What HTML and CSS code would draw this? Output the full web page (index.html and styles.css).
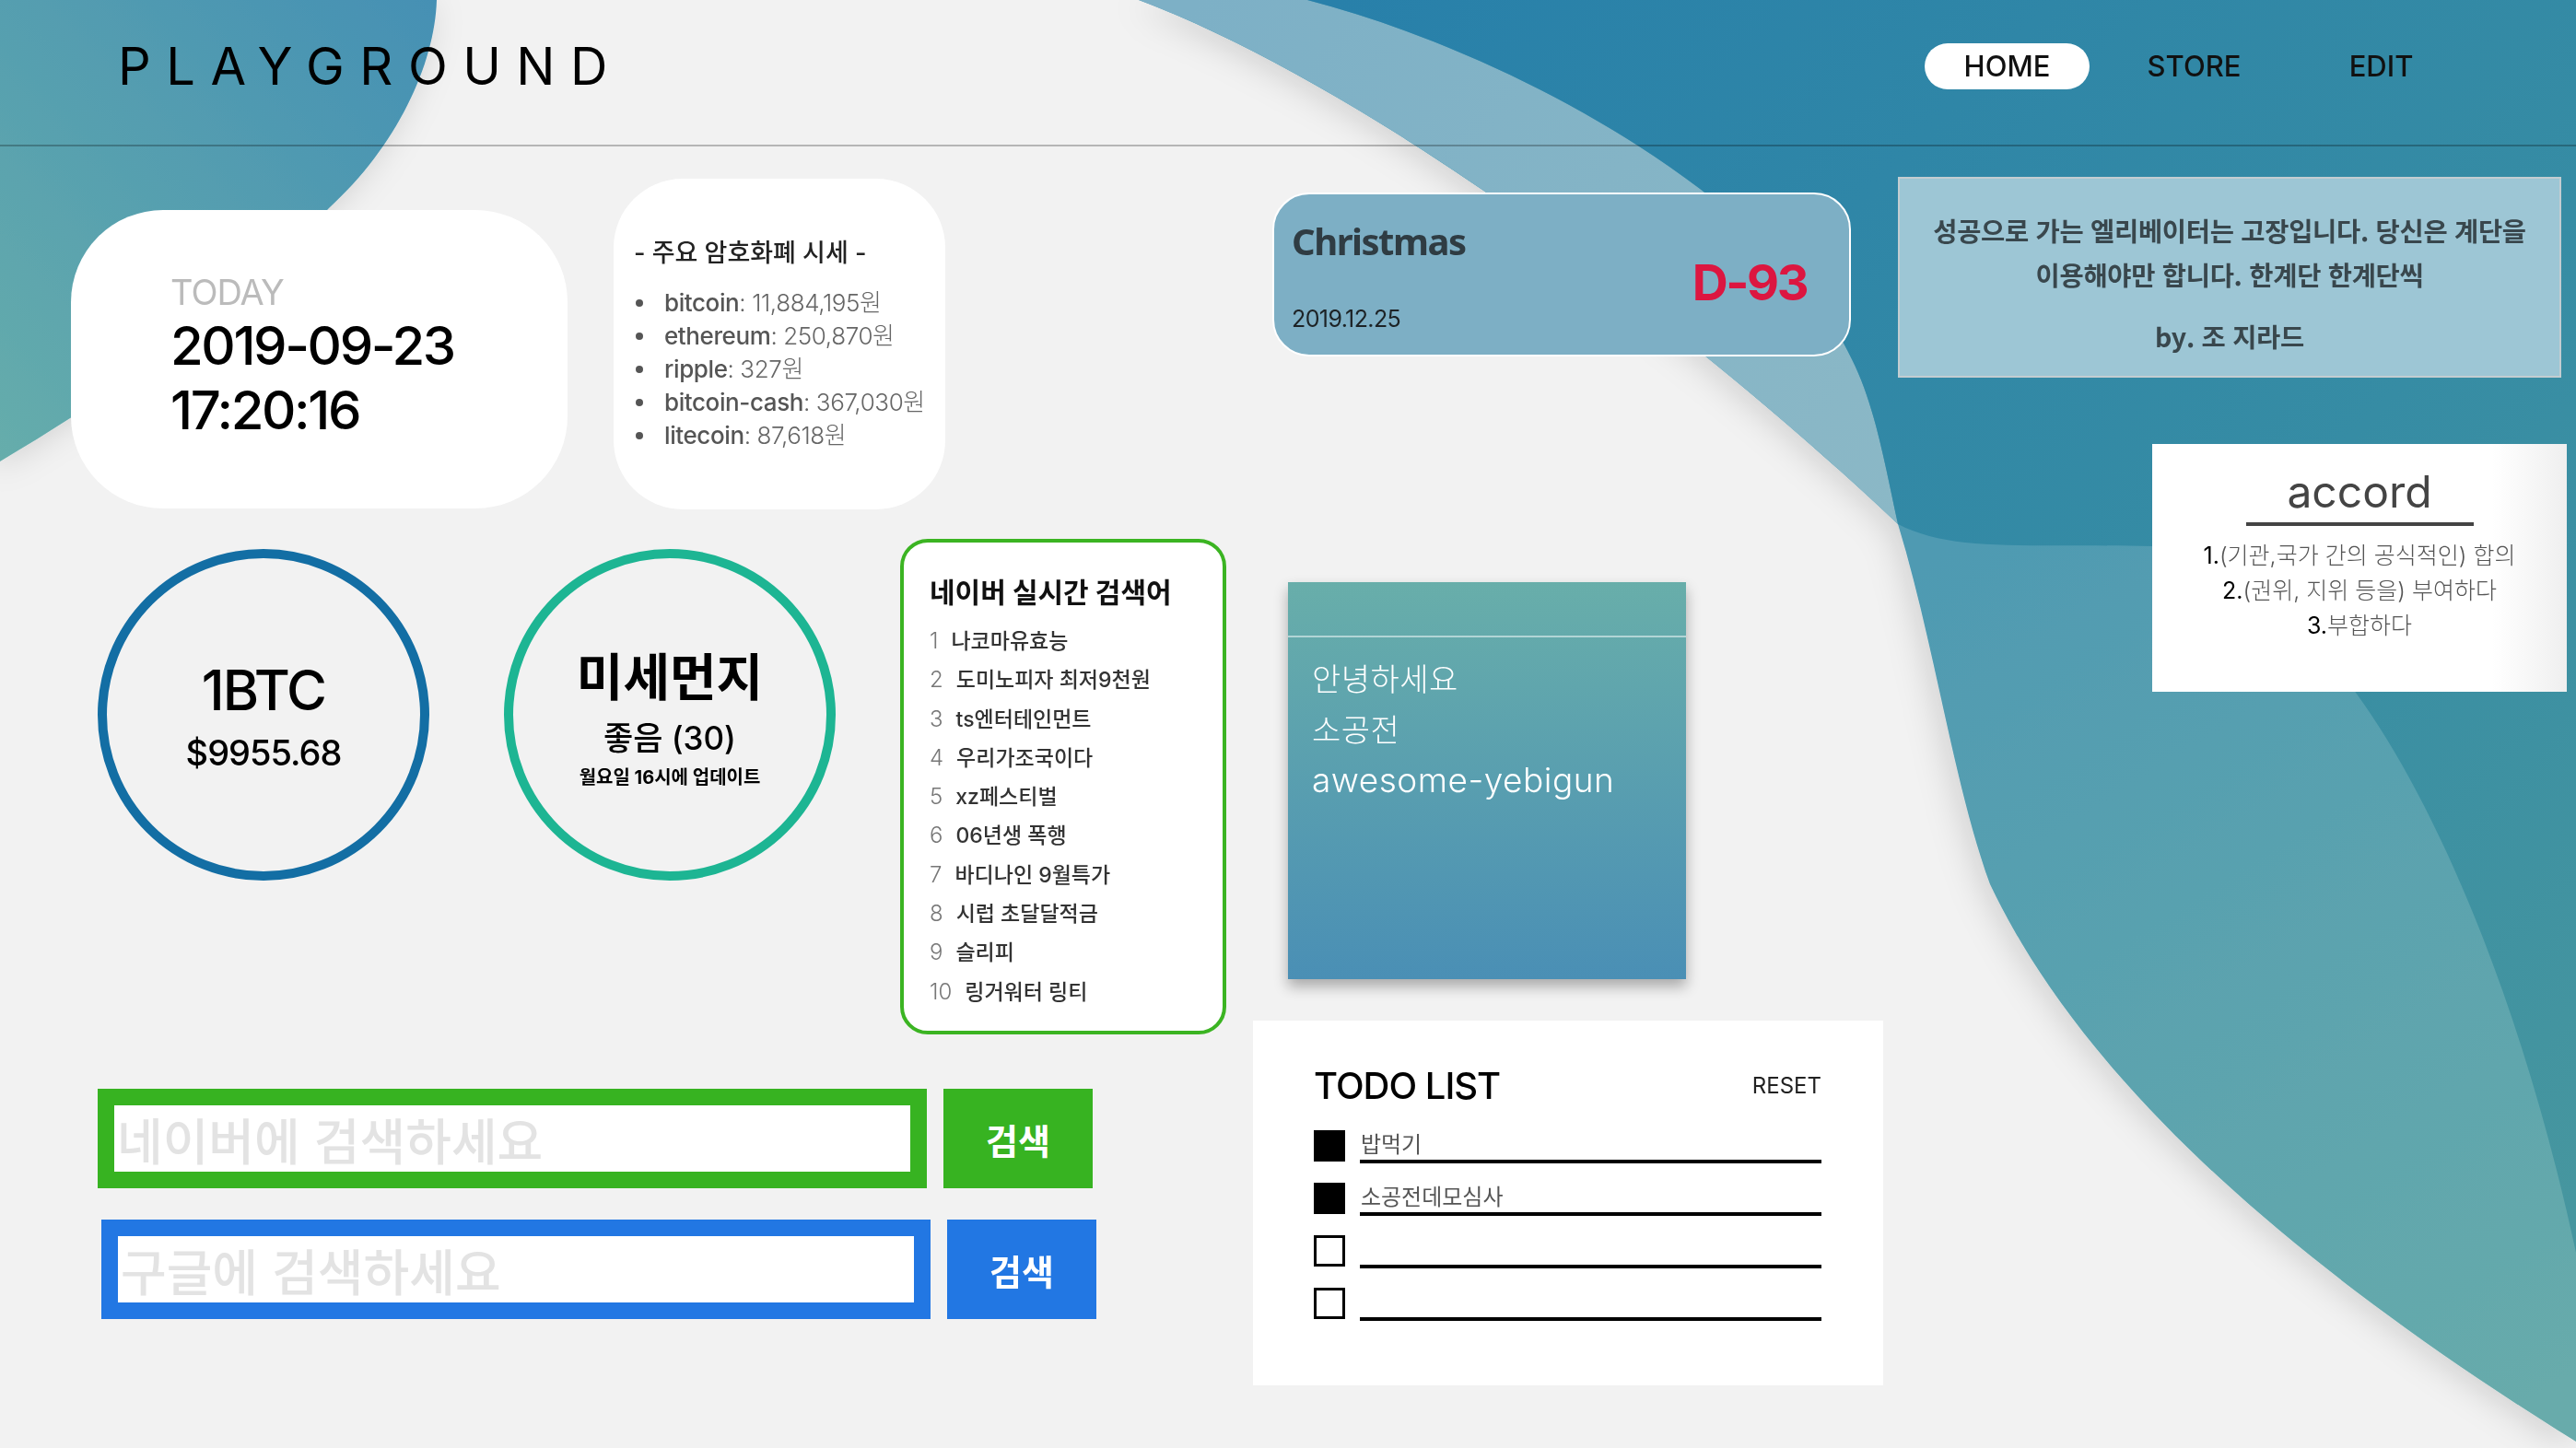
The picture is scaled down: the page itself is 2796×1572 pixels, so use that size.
FILE: index.html
```html
<!DOCTYPE html>
<html lang="ko">
<head>
    <meta charset="utf-8">
    <title>PLAYGROUND</title>
    <link rel="stylesheet" href="styles.css">
</head>
<body>
    <div class="bg">
        <svg viewBox="0 0 2796 1572" preserveAspectRatio="none">
            <defs>
                <linearGradient id="gLeft" x1="1" y1="0" x2="0" y2="1">
                    <stop offset="0" stop-color="#4590b4"/>
                    <stop offset="1" stop-color="#66adab"/>
                </linearGradient>
                <linearGradient id="gTeal" gradientUnits="userSpaceOnUse" x1="2100" y1="600" x2="2700" y2="1550">
                    <stop offset="0" stop-color="#4f9ab2"/>
                    <stop offset="1" stop-color="#67abab"/>
                </linearGradient>
                <linearGradient id="gDark" gradientUnits="userSpaceOnUse" x1="1450" y1="0" x2="2796" y2="1300">
                    <stop offset="0" stop-color="#2880aa"/>
                    <stop offset="0.6" stop-color="#368ca4"/>
                    <stop offset="1" stop-color="#46969f"/>
                </linearGradient>
                <linearGradient id="gLight" gradientUnits="userSpaceOnUse" x1="1300" y1="0" x2="2060" y2="570">
                    <stop offset="0" stop-color="#7db0c6"/>
                    <stop offset="1" stop-color="#8bb8c6"/>
                </linearGradient>
                <filter id="soft" x="-20%" y="-20%" width="140%" height="140%">
                    <feDropShadow dx="-6" dy="6" stdDeviation="18" flood-color="#000" flood-opacity="0.14"/>
                </filter>
            </defs>
            <path filter="url(#soft)" fill="url(#gLeft)" d="M0 0 H474 C472 70 430 160 357 226 C250 340 120 430 0 501 Z"/>
            <path filter="url(#soft)" fill="url(#gTeal)" d="M1236 0 C1500 100 1850 370 2060 569 C2100 700 2120 850 2160 960 C2250 1150 2450 1350 2796 1565 V0 Z"/>
            <path fill="url(#gLight)" d="M1236 0 C1500 100 1850 370 2060 569 C2045 500 2035 440 2010 390 C1930 220 1650 60 1419 0 Z"/>
            <path fill="url(#gDark)" d="M1419 0 C1650 60 1930 220 2010 390 C2035 440 2045 500 2060 569 C2120 600 2200 590 2336 593 C2450 600 2510 680 2557 752 C2650 880 2740 1100 2796 1360 V0 Z"/>
        </svg>
    </div>

    <header class="top">
        <div class="logo">PLAYGROUND</div>
        <nav class="menu">
            <a class="on">HOME</a>
            <a>STORE</a>
            <a>EDIT</a>
        </nav>
    </header>

    <main class="board">
        <section class="col-left">
            <div class="row-a">
                <div class="today">
                    <div class="today-label">TODAY</div>
                    <div class="today-date">2019-09-23</div>
                    <div class="today-date">17:20:16</div>
                </div>
                <div class="coins">
                    <h3>- 주요 암호화폐 시세 -</h3>
                    <ul>
                        <li><b>bitcoin</b>: 11,884,195원</li>
                        <li><b>ethereum</b>: 250,870원</li>
                        <li><b>ripple</b>: 327원</li>
                        <li><b>bitcoin-cash</b>: 367,030원</li>
                        <li><b>litecoin</b>: 87,618원</li>
                    </ul>
                </div>
            </div>

            <div class="row-b">
                <div class="circle btc">
                    <div class="btc-name">1BTC</div>
                    <div class="btc-price">$9955.68</div>
                </div>
                <div class="circle dust">
                    <div class="dust-title">미세먼지</div>
                    <div class="dust-value">좋음 (30)</div>
                    <div class="dust-time">월요일 16시에 업데이트</div>
                </div>
                <div class="rank">
                    <h3>네이버 실시간 검색어</h3>
                    <ol>
                        <li><span class="num">1</span>나코마유효능</li>
                        <li><span class="num">2</span>도미노피자 최저9천원</li>
                        <li><span class="num">3</span>ts엔터테인먼트</li>
                        <li><span class="num">4</span>우리가조국이다</li>
                        <li><span class="num">5</span>xz페스티벌</li>
                        <li><span class="num">6</span>06년생 폭행</li>
                        <li><span class="num">7</span>바디나인 9월특가</li>
                        <li><span class="num">8</span>시럽 초달달적금</li>
                        <li><span class="num">9</span>슬리피</li>
                        <li><span class="num">10</span>링거워터 링티</li>
                    </ol>
                </div>
            </div>

            <div class="searches">
                <form class="search naver">
                    <input type="text" placeholder="네이버에 검색하세요">
                    <button type="button">검색</button>
                </form>
                <form class="search google">
                    <input type="text" placeholder="구글에 검색하세요">
                    <button type="button">검색</button>
                </form>
            </div>
        </section>

        <section class="col-mid">
            <div class="dday">
                <div class="dday-name">Christmas</div>
                <div class="dday-count">D-93</div>
                <div class="dday-date">2019.12.25</div>
            </div>

            <div class="memo">
                <div class="memo-top"></div>
                <div class="memo-body">
                    <p class="ko">안녕하세요</p>
                    <p class="ko">소공전</p>
                    <p>awesome-yebigun</p>
                </div>
            </div>

            <div class="todo">
                <div class="todo-head">
                    <h3>TODO LIST</h3>
                    <span class="reset">RESET</span>
                </div>
                <div class="todo-row done">
                    <span class="check"></span>
                    <input type="text" value="밥먹기">
                </div>
                <div class="todo-row done">
                    <span class="check"></span>
                    <input type="text" value="소공전데모심사">
                </div>
                <div class="todo-row">
                    <span class="check"></span>
                    <input type="text">
                </div>
                <div class="todo-row">
                    <span class="check"></span>
                    <input type="text">
                </div>
            </div>
        </section>

        <section class="col-right">
            <div class="quote">
                <p>성공으로 가는 엘리베이터는 고장입니다. 당신은 계단을<br>이용해야만 합니다. 한계단 한계단씩</p>
                <p class="by">by. 조 지라드</p>
            </div>

            <div class="word">
                <div class="word-title">accord</div>
                <div class="word-bar"></div>
                <p><span>1.</span>(기관,국가 간의 공식적인) 합의</p>
                <p><span>2.</span>(권위, 지위 등을) 부여하다</p>
                <p><span>3.</span>부합하다</p>
            </div>
        </section>
    </main>
</body>
</html>
```

FILE: styles.css
```css
*{
    box-sizing: border-box;
}
html, body{
    margin: 0;
    padding: 0;
}
body{
    background-color: #f2f2f2;
    font-family: Inter, "Noto Sans CJK KR", sans-serif;
    color: #111;
    width: 2796px;
    height: 1572px;
    overflow: hidden;
}
.bg{
    position: fixed;
    top: 0;
    left: 0;
    width: 2796px;
    height: 1572px;
    z-index: -1;
}
.bg svg{
    width: 100%;
    height: 100%;
    display: block;
}
h3, p, ul, ol{
    margin: 0;
    padding: 0;
}

/*=======Header=======*/
.top{
    height: 159px;
    display: flex;
    justify-content: space-between;
    align-items: center;
    padding: 0 122px 14px 128px;
    border-bottom: 2px solid rgba(0, 0, 0, 0.25);
}
.logo{
    font-size: 56px;
    font-weight: 400;
    letter-spacing: 16.5px;
    color: #000;
}
.menu{
    display: flex;
    gap: 24px;
}
.menu a{
    width: 179px;
    height: 50px;
    line-height: 50px;
    text-align: center;
    font-size: 31px;
    font-weight: 500;
    color: #111;
    border-radius: 25px;
}
.menu a.on{
    background-color: #fff;
}

/*=======Board=======*/
.board{
    display: flex;
    align-items: flex-start;
    padding-left: 77px;
}
.col-left{
    width: 1257px;
    padding-top: 35px;
}
.col-mid{
    width: 684px;
    margin-left: 26px;
}
.col-right{
    width: 726px;
    margin-left: 16px;
}

/* today + coins */
.row-a{
    display: flex;
    align-items: flex-start;
}
.today{
    width: 539px;
    height: 324px;
    margin-top: 34px;
    padding: 66px 0 0 108px;
    background-color: #fff;
    border-radius: 100px;
}
.today-label{
    font-size: 38px;
    line-height: 46px;
    color: #bbb;
    letter-spacing: -1px;
}
.today-date{
    font-size: 58px;
    line-height: 70px;
    font-weight: 500;
    color: #000;
    letter-spacing: -2.4px;
}
.coins{
    width: 360px;
    height: 359px;
    margin-left: 50px;
    padding: 63px 0 0 22px;
    background-color: #fff;
    border-radius: 75px;
}
.coins h3{
    font-size: 27px;
    line-height: 36px;
    font-weight: 500;
    color: #222;
}
.coins ul{
    list-style: none;
    margin-top: 18px;
}
.coins li{
    display: flex;
    align-items: center;
    font-size: 26px;
    line-height: 36px;
    font-weight: 300;
    color: #666;
    white-space: pre;
    letter-spacing: -0.4px;
}
.coins li::before{
    content: '';
    width: 8px;
    height: 8px;
    border-radius: 50%;
    background-color: #555;
    margin: 0 23px 0 2px;
}
.coins li b{
    font-weight: 500;
    color: #555;
}

/* circles + rank */
.row-b{
    display: flex;
    align-items: flex-start;
    margin-top: 32px;
    padding-left: 29px;
}
.circle{
    width: 360px;
    height: 360px;
    margin-top: 11px;
    border: 10px solid;
    border-radius: 50%;
    display: flex;
    flex-direction: column;
    align-items: center;
    justify-content: center;
    color: #000;
}
.btc{
    border-color: #136ea4;
    padding-top: 14px;
}
.dust{
    border-color: #1db593;
    margin-left: 81px;
    padding-top: 9px;
}
.btc-name{
    font-size: 60px;
    line-height: 68px;
    font-weight: 500;
    letter-spacing: -2px;
}
.btc-price{
    font-size: 38px;
    line-height: 68px;
    font-weight: 500;
    letter-spacing: -1px;
}
.dust-title{
    font-size: 55px;
    line-height: 64px;
    font-weight: 700;
}
.dust-value{
    margin-top: 6px;
    font-size: 35px;
    line-height: 56px;
    font-weight: 500;
}
.dust-time{
    font-size: 20px;
    line-height: 30px;
    font-weight: 700;
}
.rank{
    width: 354px;
    height: 538px;
    margin-left: 70px;
    padding: 34px 0 0 28px;
    background-color: #fff;
    border: 4px solid #3bb422;
    border-radius: 30px;
}
.rank h3{
    font-size: 30px;
    line-height: 40px;
    font-weight: 700;
    color: #111;
}
.rank ol{
    list-style: none;
    margin-top: 12px;
}
.rank li{
    font-size: 23px;
    line-height: 41.3px;
    font-weight: 500;
    color: #333;
}
.rank .num{
    font-size: 24px;
    font-weight: 300;
    color: #777;
    margin-right: 14px;
}

/* search */
.searches{
    margin-top: 59px;
    padding-left: 29px;
}
.search{
    display: flex;
    margin: 0;
}
.search input{
    width: 900px;
    height: 108px;
    border: 18px solid;
    padding: 0 3px;
    font-family: "Noto Sans CJK KR", sans-serif;
    font-size: 54px;
    font-weight: 500;
    outline: none;
    background-color: #fff;
}
.search input::placeholder{
    color: #e3e3e3;
}
.search button{
    width: 162px;
    height: 108px;
    margin-left: 18px;
    border: none;
    color: #fff;
    font-family: "Noto Sans CJK KR", sans-serif;
    font-size: 38px;
    font-weight: 700;
}
.naver input{
    border-color: #37b321;
}
.naver button{
    background-color: #37b321;
}
.google{
    margin-top: 34px;
    margin-left: 4px;
}
.google input{
    border-color: #2277e3;
}
.google button{
    background-color: #2277e3;
}

/* d-day */
.dday{
    width: 628px;
    height: 178px;
    margin: 50px 0 0 21px;
    padding: 26px 46px 0 19px;
    background-color: #7dafc5;
    border: 2px solid #fff;
    border-radius: 40px;
    display: grid;
    grid-template-columns: 1fr auto;
    grid-template-rows: 50px auto;
}
.dday-name{
    font-family: "Noto Sans", sans-serif;
    font-size: 40px;
    line-height: 50px;
    font-weight: 700;
    color: #2f3c43;
    letter-spacing: -1.5px;
}
.dday-count{
    grid-row: 1 / 3;
    grid-column: 2;
    align-self: center;
    margin-bottom: 8px;
    font-size: 54px;
    line-height: 60px;
    font-weight: 700;
    color: #dc1640;
    letter-spacing: -2.5px;
}
.dday-date{
    margin-top: 44px;
    font-size: 25px;
    line-height: 30px;
    color: #1d2326;
    letter-spacing: -0.6px;
}

/* memo */
.memo{
    width: 432px;
    height: 431px;
    margin: 245px 0 0 38px;
    background: linear-gradient(#68aeaa, #4a8fb5);
    box-shadow: 0 8px 14px rgba(0, 0, 0, 0.3);
}
.memo-top{
    height: 60px;
    border-bottom: 2px solid rgba(255, 255, 255, 0.5);
}
.memo-body{
    padding: 19px 26px 0;
    color: #fff;
    font-size: 37px;
    line-height: 54.5px;
    font-weight: 300;
    letter-spacing: 0.5px;
}
.memo-body .ko{
    font-size: 34px;
}

/* todo */
.todo{
    width: 684px;
    height: 396px;
    margin-top: 45px;
    padding: 46px 67px 0 66px;
    background-color: #fff;
}
.todo-head{
    height: 48px;
    display: flex;
    justify-content: space-between;
    align-items: center;
    margin-bottom: 25px;
}
.todo-head h3{
    font-size: 40px;
    font-weight: 500;
    color: #000;
    letter-spacing: -1px;
}
.reset{
    font-size: 24px;
    color: #222;
}
.todo-row{
    display: flex;
    gap: 16px;
    margin-bottom: 21px;
}
.check{
    width: 34px;
    height: 34px;
    border: 3px solid #000;
}
.done .check{
    background-color: #000;
}
.todo-row input{
    width: 502px;
    height: 36px;
    border: none;
    border-bottom: 4px solid #000;
    padding: 0 1px 6px;
    font-family: "Noto Sans CJK KR", sans-serif;
    font-size: 24px;
    color: #555;
    outline: none;
    background: transparent;
}

/* quote */
.quote{
    width: 720px;
    height: 218px;
    margin-top: 33px;
    padding-top: 32px;
    background-color: #9dc6d5;
    border: 2px solid #c3cdd1;
    text-align: center;
    font-family: "Noto Sans CJK KR", sans-serif;
    font-size: 28.5px;
    line-height: 48px;
    font-weight: 700;
    color: #39474d;
    white-space: nowrap;
    letter-spacing: -0.3px;
}
.quote .by{
    margin-top: 19px;
}

/* word */
.word{
    width: 450px;
    height: 269px;
    margin: 72px 0 0 276px;
    padding-top: 24px;
    background: linear-gradient(90deg, #fff 82%, #efefef);
    text-align: center;
    color: #555;
}
.word-title{
    font-size: 48px;
    line-height: 56px;
    color: #444;
}
.word-bar{
    width: 247px;
    height: 4px;
    margin: 5px auto 13px;
    background-color: #444;
}
.word p{
    font-size: 25px;
    line-height: 38px;
    font-weight: 300;
}
.word p span{
    color: #000;
    font-weight: 400;
}
```
